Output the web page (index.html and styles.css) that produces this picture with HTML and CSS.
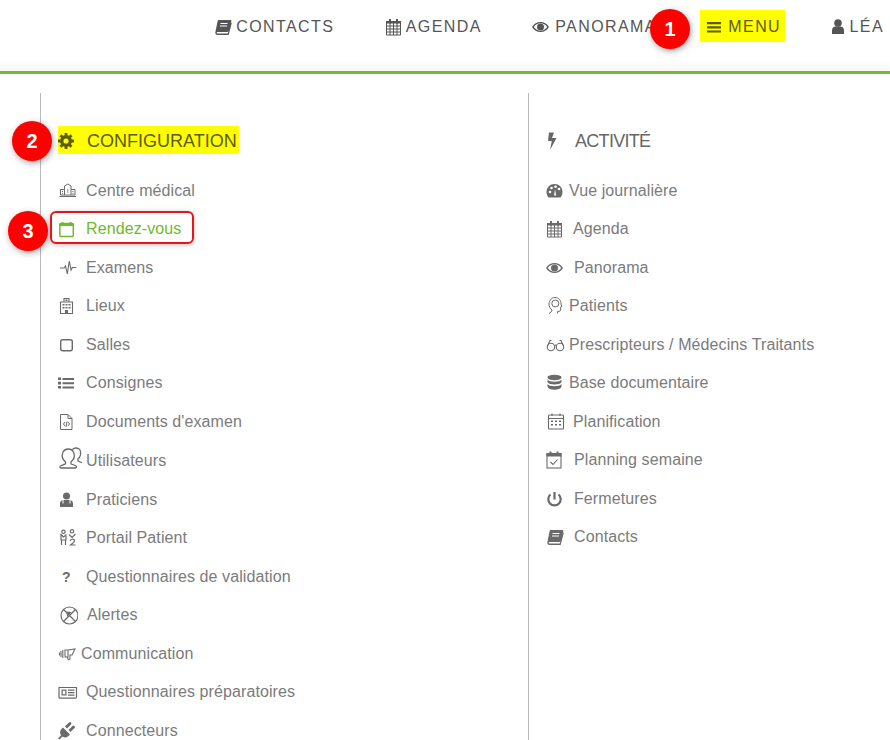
FILE: index.html
```html
<!DOCTYPE html>
<html lang="fr">
<head>
  <meta charset="UTF-8" />
  <title>Menu</title>
  <link rel="stylesheet" href="styles.css">
</head>
<body>

  <svg class="sprite" xmlns="http://www.w3.org/2000/svg">
    <symbol id="i-book" viewBox="0 0 20 20" overflow="visible">
      <path d="M5 3h11.500c.8 0 1 .5.8 1.200l-2.600 9.600c-.2.700-.6 1.200-1.400 1.200H3.400c-.9 0-1 1.500 0 1.500h10.400l3.200-11 .8.600-3 11.300c-.1.400-.4.600-.8.600H3.600C1.800 18 1 16.600 1.400 15L3.600 4.200C3.800 3.500 4.300 3 5 3z"/>
      <path d="M6.500 6.500h7M6 9h7" stroke="#fff" stroke-width="1" fill="none"/>
    </symbol>
    <symbol id="i-agenda" viewBox="0 0 20 20" overflow="visible">
      <path d="M1.500 5h14v13h-14z M1.500 9h14 M1.500 12h14 M1.500 15h14 M5 5v13 M8.500 5v13 M12 5v13" fill="none" stroke="currentColor" stroke-width="1"/>
      <path d="M4 2h2v4.500H4zM11 2h2v4.500h-2z"/>
      <path d="M1 4h15v2.500H1z"/>
    </symbol>
    <symbol id="i-eye" viewBox="0 0 20 20" overflow="visible">
      <path fill-rule="evenodd" d="M0 10c2-3.300 5-5 8.500-5S15 6.700 17 10c-2 3.300-5 5-8.500 5S2 13.300 0 10zm1.800 0c1.700 2.400 4 3.700 6.700 3.700s5-1.300 6.700-3.700c-1.700-2.400-4-3.700-6.700-3.700S3.500 7.600 1.800 10z"/>
      <circle cx="8.500" cy="10" r="3.500"/>
    </symbol>
    <symbol id="i-bars" viewBox="0 0 20 20"><path d="M0 5h14v2.200H0zM0 9.200h14v2.200H0zM0 13.400h14v2.200H0z"/></symbol>
    <symbol id="i-user" viewBox="0 0 20 20"><circle cx="6" cy="6" r="3.800"/><path d="M0 17v-3.500C0 11 1.500 9.500 3.500 9.500h5c2 0 3.500 1.500 3.500 4V17z"/></symbol>
    <symbol id="i-cog" viewBox="0 0 20 20">
      <circle cx="8" cy="10" r="4.300" fill="none" stroke="currentColor" stroke-width="3.400"/>
      <path d="M6.600 2h2.800v3H6.600zM6.600 15h2.800v3H6.600zM0 8.600h3v2.800H0zM13 8.600h3v2.800h-3zM1.500 5.300l2-2 2.200 2.200-2 2zM10.300 14.500l2-2 2.200 2.200-2 2zM14.500 5.300l-2-2-2.200 2.200 2 2zM5.700 14.500l-2-2-2.200 2.200 2 2z"/>
    </symbol>
    <symbol id="i-bolt" viewBox="0 0 20 20"><path d="M3 1.500h5L6 7h4.500L4 19l1.800-9H2z"/></symbol>
    <symbol id="i-hospital" viewBox="0 0 20 20">
      <path d="M2.500 8.500V14H17V8.500h-4V5l-3.200-2L6.500 5v3.500zM6.500 8.500V14M13 8.500V14M1.500 15.500h16.500M4 10.500h1M4 12.300h1M14.500 10.500h1M14.500 12.300h1M9 9h1.500M9 11h1.500" fill="none" stroke="currentColor" stroke-width="1"/>
    </symbol>
    <symbol id="i-calgreen" viewBox="0 0 20 20">
      <rect x="1.800" y="4.500" width="13.500" height="13" rx="1" fill="none" stroke="currentColor" stroke-width="1.500"/>
      <path d="M1.500 4.500h14v2.500h-14zM3.500 3h2v2h-2zM11.500 3h2v2h-2z"/>
    </symbol>
    <symbol id="i-pulse" viewBox="0 0 20 20"><path d="M2 10h4l1.500-2 1.800 8 2-13 1.800 9 1.200-2.500h4" fill="none" stroke="currentColor" stroke-width="1.100"/></symbol>
    <symbol id="i-building" viewBox="0 0 20 20">
      <path d="M2.500 6h12v11.500h-12z M6 6V2.500h5V6" fill="none" stroke="currentColor" stroke-width="1.100"/>
      <path d="M4.500 8h2v1.500h-2zM7.500 8h2v1.500h-2zM10.500 8h2v1.500h-2zM4.500 11h2v1.500h-2zM7.500 11h2v1.500h-2zM10.500 11h2v1.500h-2zM7 14h3v3.500H7zM7.500 3.500h2v1.500h-2z"/>
    </symbol>
    <symbol id="i-square" viewBox="0 0 20 20"><rect x="2.700" y="4.700" width="11.600" height="11" rx="2" fill="none" stroke="currentColor" stroke-width="1.400"/></symbol>
    <symbol id="i-list" viewBox="0 0 20 20"><path d="M0 4.500h3v2.600H0zM0 8.800h3v2.600H0zM0 13h3v2.600H0zM4.500 5h11.500v2H4.500zM4.500 9.200h11.500v2H4.500zM4.500 13.400h11.500v2H4.500z"/></symbol>
    <symbol id="i-doc" viewBox="0 0 20 20">
      <path d="M2.500 2.500h7.500l4 4v11h-11.500zM10 2.500v4h4M7 10l-1.500 2 1.500 2M10 10l1.500 2-1.500 2M9 9.500l-1 5.500" fill="none" stroke="currentColor" stroke-width="1"/>
    </symbol>
    <symbol id="i-users" viewBox="0 0 20 20" overflow="visible">
      <path d="M7.500 11C4.500 8.500 3.500 4.500 5 1c2-4 8.500-4 10.500 0 1.500 3.500.5 7.500-2.500 10v2c1.800.6 3.500 1.200 5 2 .8.500.6 2-.5 2H3c-1.200 0-1.500-1.400-.5-2 1.500-.8 3.300-1.400 5-2zM14.500-1.500c2-2.200 6-2 7.500.5 1.500 3 .5 7-2 9v2c1 .3 2.500 1 4 1.800" fill="none" stroke="currentColor" stroke-width="1.300"/>
    </symbol>
    <symbol id="i-doctor" viewBox="0 0 20 20">
      <circle cx="8.500" cy="6" r="3.500"/>
      <path d="M2 17v-3.500c0-2 1.500-3.500 3.500-3.500h6c2 0 3.500 1.500 3.500 3.500V17z"/>
      <path d="M5 10v3.500M12 10v3.500" stroke="#fff" stroke-width="1" fill="none"/>
    </symbol>
    <symbol id="i-portal" viewBox="0 0 20 20">
      <circle cx="5.500" cy="3.800" r="1.700" fill="none" stroke="currentColor" stroke-width="1.200"/>
      <circle cx="14" cy="3.300" r="1.700" fill="none" stroke="currentColor" stroke-width="1.200"/>
      <path d="M2.500 6l3 3 3-2.500M3 6.500V12M8 8v4M2.500 12h6M3.500 12v5M7.500 12v5M11 6.500l3 3 3.500-3.500M12 13c1-2 4-2.500 4.500-.5.400 1.500-2.500 3-4 4.500h5" fill="none" stroke="currentColor" stroke-width="1.200"/>
    </symbol>
    <symbol id="i-alert" viewBox="0 0 20 20">
      <circle cx="11.500" cy="10.500" r="8.500" fill="none" stroke="currentColor" stroke-width="1.200"/>
      <path d="M5.500 4.500l12 12M17.500 4.500l-12 12" fill="none" stroke="currentColor" stroke-width="1.300"/>
      <path d="M8.500 6.500l5 .5-4.500 5z"/>
    </symbol>
    <symbol id="i-comm" viewBox="0 0 20 20">
      <path d="M3 7v6M4.800 6v8M1.500 8.500v3M7 6h3v7H7zM10 6l7-1-3 6h-2v3.500c0 1-1 1.500-1.700 1L9 13" fill="none" stroke="currentColor" stroke-width="1.100"/>
    </symbol>
    <symbol id="i-news" viewBox="0 0 20 20">
      <path d="M1 5.500h17.500v9.500c0 .8-.4 1.200-1.200 1.200H2c-.7 0-1-.4-1-1.200z" fill="none" stroke="currentColor" stroke-width="1.200"/>
      <path d="M3.500 7.500h5v6h-5zM10 7.500h6.500v1.300H10zM10 10h6.500v1.300H10zM10 12.500h6.500v1.300H10z"/>
      <path d="M4.700 8.700h2.600v3.600H4.700z" fill="#fff"/>
    </symbol>
    <symbol id="i-plug" viewBox="0 0 20 20" overflow="visible">
      <path d="M0 17.500l3-3C1.500 11.500 2 9.500 3.500 8L5 6.500l7 7L10.500 15C9 16.500 6.500 17 4.500 15.500l-3 3zM7 5.500l4-4q1-1 2 0t0 2l-4 4zM10.500 9l4-4q1-1 2 0t0 2l-4 4z"/>
    </symbol>
    <symbol id="i-gauge" viewBox="0 0 20 20">
      <path d="M8.500 3C4 3 .5 6.500.5 11c0 2 .7 4 2 5.500h12c1.300-1.500 2-3.500 2-5.500 0-4.500-3.500-8-8-8z"/>
      <circle cx="4" cy="11" r="1.300" fill="#fff"/><circle cx="5.500" cy="7" r="1.300" fill="#fff"/><circle cx="9.500" cy="5.800" r="1.300" fill="#fff"/><circle cx="13" cy="8" r="1.300" fill="#fff"/>
      <path d="M8 14.500l1-6 1.200 6z" fill="#fff"/>
    </symbol>
    <symbol id="i-head" viewBox="0 0 20 20">
      <path d="M6 14c-1.800-1.500-3-3.500-3-6 0-3.500 2.500-6.500 6-6.500s6 2.800 6 6.300c0 1 .2 1.500 1 2.500l-1.300.7v3c0 1-1 1.500-3 1.300l-.2 2.200M6 14c0 1.500-1.500 2.500-3 3.500" fill="none" stroke="currentColor" stroke-width="1"/>
      <circle cx="9.300" cy="7.500" r="3.500" fill="none" stroke="currentColor" stroke-width="1"/>
    </symbol>
    <symbol id="i-glasses" viewBox="0 0 20 20">
      <circle cx="5" cy="12" r="3.700" fill="none" stroke="currentColor" stroke-width="1.100"/>
      <circle cx="14" cy="12" r="3.700" fill="none" stroke="currentColor" stroke-width="1.100"/>
      <path d="M8.500 10.500c.7-.5 1.300-.5 2 0M1.500 11L4 5.500h1.500M17.500 11L15 5.500h-1.500" fill="none" stroke="currentColor" stroke-width="1.100"/>
    </symbol>
    <symbol id="i-db" viewBox="0 0 20 20">
      <ellipse cx="8.500" cy="4.500" rx="7" ry="2.700"/>
      <path d="M1.500 6.500c1 1.500 3.500 2.200 7 2.200s6-.7 7-2.200v2.800c-1 1.500-3.500 2.200-7 2.200s-6-.7-7-2.200zM1.500 11c1 1.500 3.500 2.200 7 2.200s6-.7 7-2.200v2.800c-.5 2-3.500 3-7 3s-6.500-1-7-3z"/>
    </symbol>
    <symbol id="i-caldots" viewBox="0 0 20 20">
      <rect x="2.500" y="3" width="15" height="14" rx="1" fill="none" stroke="currentColor" stroke-width="1.100"/>
      <path d="M2.500 6.500h15M6 1.500V4M14 1.500V4" fill="none" stroke="currentColor" stroke-width="1.100"/>
      <path d="M5 8.500h2v1.600H5zM9 8.500h2v1.600H9zM13 8.500h2v1.600h-2zM5 12h2v1.600H5zM9 12h2v1.600H9zM13 12h2v1.600h-2z"/>
    </symbol>
    <symbol id="i-calcheck" viewBox="0 0 20 20">
      <rect x="1" y="3.500" width="14" height="14.500" fill="none" stroke="currentColor" stroke-width="1.100"/>
      <path d="M.5 3.500h15v3H.5zM3.500 1.500h2v3h-2zM10.500 1.500h2v3h-2z"/>
      <path d="M4.500 12l2.500 2.500 4.500-5" fill="none" stroke="currentColor" stroke-width="1.100"/>
    </symbol>
    <symbol id="i-power" viewBox="0 0 20 20">
      <path d="M4.500 5.500a6.200 6.200 0 1 0 8 0" fill="none" stroke="currentColor" stroke-width="2.200"/>
      <path d="M7.400 3h2.200v7.500H7.400z"/>
    </symbol>
  </svg>

  <header class="topbar">
    <nav class="nav">
      <a class="nav-item"><svg class="nav-icon gap-2"><use href="#i-book"/></svg>CONTACTS</a>
      <a class="nav-item"><svg class="nav-icon"><use href="#i-agenda"/></svg>AGENDA</a>
      <a class="nav-item"><svg class="nav-icon gap-3"><use href="#i-eye"/></svg>PANORAMA</a>
      <a class="nav-item marked"><svg class="nav-icon"><use href="#i-bars"/></svg>MENU</a>
      <a class="nav-item"><svg class="nav-icon gap-less"><use href="#i-user"/></svg>LÉA</a>
    </nav>
  </header>

  <main class="menu">
    <section class="column">
      <h2 class="title marked"><svg class="title-icon"><use href="#i-cog"/></svg>CONFIGURATION</h2>
      <ul class="list">
        <li class="item"><svg class="icon"><use href="#i-hospital"/></svg>Centre médical</li>
        <li class="item active"><svg class="icon"><use href="#i-calgreen"/></svg>Rendez-vous</li>
        <li class="item"><svg class="icon"><use href="#i-pulse"/></svg>Examens</li>
        <li class="item"><svg class="icon"><use href="#i-building"/></svg>Lieux</li>
        <li class="item"><svg class="icon"><use href="#i-square"/></svg>Salles</li>
        <li class="item"><svg class="icon"><use href="#i-list"/></svg>Consignes</li>
        <li class="item"><svg class="icon"><use href="#i-doc"/></svg>Documents d'examen</li>
        <li class="item tall"><svg class="icon"><use href="#i-users"/></svg>Utilisateurs</li>
        <li class="item"><svg class="icon"><use href="#i-doctor"/></svg>Praticiens</li>
        <li class="item"><svg class="icon"><use href="#i-portal"/></svg>Portail Patient</li>
        <li class="item"><span class="icon glyph">?</span>Questionnaires de validation</li>
        <li class="item"><svg class="icon gap-9"><use href="#i-alert"/></svg>Alertes</li>
        <li class="item"><svg class="icon gap-3"><use href="#i-comm"/></svg>Communication</li>
        <li class="item"><svg class="icon"><use href="#i-news"/></svg>Questionnaires préparatoires</li>
        <li class="item"><svg class="icon"><use href="#i-plug"/></svg>Connecteurs</li>
      </ul>
    </section>

    <section class="column">
      <h2 class="title tight"><svg class="title-icon"><use href="#i-bolt"/></svg>ACTIVITÉ</h2>
      <ul class="list">
        <li class="item"><svg class="icon gap-3"><use href="#i-gauge"/></svg>Vue journalière</li>
        <li class="item"><svg class="icon gap-7"><use href="#i-agenda"/></svg>Agenda</li>
        <li class="item"><svg class="icon"><use href="#i-eye"/></svg>Panorama</li>
        <li class="item"><svg class="icon gap-3"><use href="#i-head"/></svg>Patients</li>
        <li class="item"><svg class="icon gap-3"><use href="#i-glasses"/></svg>Prescripteurs / Médecins Traitants</li>
        <li class="item"><svg class="icon gap-3"><use href="#i-db"/></svg>Base documentaire</li>
        <li class="item"><svg class="icon gap-7"><use href="#i-caldots"/></svg>Planification</li>
        <li class="item"><svg class="icon"><use href="#i-calcheck"/></svg>Planning semaine</li>
        <li class="item"><svg class="icon"><use href="#i-power"/></svg>Fermetures</li>
        <li class="item"><svg class="icon"><use href="#i-book"/></svg>Contacts</li>
      </ul>
    </section>
  </main>

  <span class="badge badge-menu">1</span>
  <span class="badge badge-config">2</span>
  <span class="badge badge-rdv">3</span>
  <span class="outline"></span>

</body>
</html>
```

FILE: styles.css
```css
* {
  margin: 0;
  padding: 0;
  box-sizing: border-box;
}

html, body {
  height: 100%;
  background-color: #fff;
  font-family: 'Liberation Sans', Arial, sans-serif;
  overflow: hidden;
}

body {
  display: flex;
  flex-direction: column;
}

.sprite {
  display: none;
}

.topbar {
  height: 74px;
  padding-top: 10px;
  border-bottom: 3px solid #76b82f;
  background: linear-gradient(#fff 85%, #f7f7f7);
  flex: none;
}

.nav {
  display: flex;
  justify-content: flex-end;
  gap: 39.5px;
  padding-right: 2px;
}

.nav-item {
  display: flex;
  align-items: center;
  height: 32px;
  padding: 1px 4px 0 7px;
  font-size: 16px;
  letter-spacing: 1.4px;
  color: #555;
}

.nav-icon {
  width: 20px;
  height: 20px;
  margin-right: 1px;
  flex: none;
  fill: currentColor;
  overflow: visible;
}

.marked {
  background-color: #ff0;
  color: #5c5c00;
}

.menu {
  flex: 1;
  display: grid;
  grid-template-columns: 488px 1fr;
  margin: 19px 0 0 40px;
  min-height: 0;
}

.column {
  border-left: 1px solid #bbb;
  padding: 33px 0 0 17px;
  min-width: 0;
}

.title {
  display: flex;
  align-items: center;
  width: fit-content;
  height: 28px;
  padding: 2px 2px 0 0;
  font-size: 18px;
  font-weight: 400;
  color: #666;
}

.title.marked {
  color: #5c5c00;
}

.title.tight {
  letter-spacing: -0.7px;
}

.title-icon {
  width: 20px;
  height: 20px;
  margin-right: 9px;
  fill: currentColor;
  overflow: visible;
}

.list {
  list-style: none;
  margin-top: 17.5px;
}

.item {
  display: flex;
  align-items: center;
  height: 38.5px;
  font-size: 16px;
  letter-spacing: 0.1px;
  color: #7b7b7b;
}

.item.tall {
  height: 39.5px;
}

.item.active {
  color: #6fb92c;
}

.icon {
  width: 20px;
  height: 20px;
  margin-right: 8px;
  flex: none;
  fill: currentColor;
  color: #6a6a6a;
  overflow: visible;
}

.item.active .icon {
  color: #6fb92c;
}

.gap-2 {
  margin-right: 2px;
}

.gap-3 {
  margin-right: 3px;
}

.gap-7 {
  margin-right: 7px;
}

.gap-9 {
  margin-right: 9px;
}

.gap-less {
  margin-right: -2px;
}

.glyph {
  padding-left: 4px;
  font-size: 14px;
  font-weight: 700;
  line-height: 20px;
}

.badge {
  position: absolute;
  width: 40px;
  height: 40px;
  border-radius: 50%;
  background-color: #f00;
  color: #fff;
  font-size: 20px;
  font-weight: 700;
  line-height: 40px;
  text-align: center;
  box-shadow: 1px 2px 6px rgba(0,0,0,0.35);
}

.badge-menu {
  top: 9px;
  left: 650px;
}

.badge-config {
  top: 121px;
  left: 12px;
}

.badge-rdv {
  top: 211px;
  left: 8px;
}

.outline {
  position: absolute;
  top: 211px;
  left: 50px;
  width: 144px;
  height: 33px;
  border: 2px solid #e8141c;
  border-radius: 6px;
  box-shadow: 0 1px 5px rgba(0,0,0,0.25);
}
```
